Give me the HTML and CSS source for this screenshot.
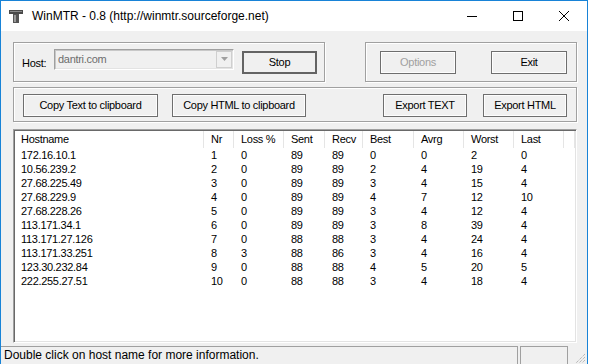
FILE: index.html
```html
<!DOCTYPE html>
<html>
<head>
  <title>WinMTR - 0.8</title>
  <link rel="stylesheet" href="styles.css">
</head>
<body>
  <div class="window">
    <div class="titlebar">
      <svg class="app-icon" width="14" height="13" viewBox="0 0 14 13">
        <rect x="0" y="0" width="14" height="4" fill="#4a4a4a"/>
        <rect x="1" y="1" width="12" height="1" fill="#8a8a8a"/>
        <rect x="4" y="4" width="6" height="9" fill="#555"/>
        <rect x="5" y="5" width="2" height="7" fill="#9a9a9a"/>
      </svg>
      <span class="title">WinMTR - 0.8 (http://winmtr.sourceforge.net)</span>
      <div class="caption">
        <span class="cap">
          <svg width="10" height="10" viewBox="0 0 10 10"><line x1="0" y1="5.5" x2="10" y2="5.5" stroke="#000"/></svg>
        </span>
        <span class="cap">
          <svg width="10" height="10" viewBox="0 0 10 10"><rect x="0.5" y="0.5" width="9" height="9" fill="none" stroke="#000"/></svg>
        </span>
        <span class="cap">
          <svg width="10" height="10" viewBox="0 0 10 10"><path d="M0 0 L10 10 M10 0 L0 10" stroke="#000" stroke-width="1"/></svg>
        </span>
      </div>
    </div>

    <div class="client">
      <div class="top-row">
        <div class="group host-group">
          <label class="host-label">Host:</label>
          <div class="combo">
            <span class="combo-text">dantri.com</span>
            <span class="combo-arrow">
              <svg width="7" height="4" viewBox="0 0 7 4"><path d="M0 0 H7 L3.5 4 Z" fill="#a0a0a0"/></svg>
            </span>
          </div>
          <button class="btn btn-default stop">Stop</button>
        </div>
        <div class="group opt-group">
          <button class="btn small" disabled>Options</button>
          <button class="btn small exit">Exit</button>
        </div>
      </div>

      <div class="group export-group">
        <button class="btn copy-text">Copy Text to clipboard</button>
        <button class="btn copy-html">Copy HTML to clipboard</button>
        <button class="btn export export-text">Export TEXT</button>
        <button class="btn export export-html">Export HTML</button>
      </div>

      <div class="list">
        <div class="row head">
          <span class="host">Hostname</span><span>Nr</span><span>Loss %</span><span>Sent</span><span>Recv</span><span>Best</span><span>Avrg</span><span>Worst</span><span>Last</span><span></span>
        </div>
        <div class="row"><span class="host">172.16.10.1</span><span>1</span><span>0</span><span>89</span><span>89</span><span>0</span><span>0</span><span>2</span><span>0</span></div>
        <div class="row"><span class="host">10.56.239.2</span><span>2</span><span>0</span><span>89</span><span>89</span><span>2</span><span>4</span><span>19</span><span>4</span></div>
        <div class="row"><span class="host">27.68.225.49</span><span>3</span><span>0</span><span>89</span><span>89</span><span>3</span><span>4</span><span>15</span><span>4</span></div>
        <div class="row"><span class="host">27.68.229.9</span><span>4</span><span>0</span><span>89</span><span>89</span><span>4</span><span>7</span><span>12</span><span>10</span></div>
        <div class="row"><span class="host">27.68.228.26</span><span>5</span><span>0</span><span>89</span><span>89</span><span>3</span><span>4</span><span>12</span><span>4</span></div>
        <div class="row"><span class="host">113.171.34.1</span><span>6</span><span>0</span><span>89</span><span>89</span><span>3</span><span>8</span><span>39</span><span>4</span></div>
        <div class="row"><span class="host">113.171.27.126</span><span>7</span><span>0</span><span>88</span><span>88</span><span>3</span><span>4</span><span>24</span><span>4</span></div>
        <div class="row"><span class="host">113.171.33.251</span><span>8</span><span>3</span><span>88</span><span>86</span><span>3</span><span>4</span><span>16</span><span>4</span></div>
        <div class="row"><span class="host">123.30.232.84</span><span>9</span><span>0</span><span>88</span><span>88</span><span>4</span><span>5</span><span>20</span><span>5</span></div>
        <div class="row"><span class="host">222.255.27.51</span><span>10</span><span>0</span><span>88</span><span>88</span><span>3</span><span>4</span><span>18</span><span>4</span></div>
      </div>
    </div>

    <div class="statusbar">
      <div class="panel main-panel">Double click on host name for more information.</div>
      <div class="panel side-panel"></div>
      <svg class="grip" width="12" height="12" viewBox="0 0 12 12">
        <path d="M11 2 L2 11 M11 5 L5 11 M11 8 L8 11" stroke="#a0a0a0" stroke-width="1" stroke-dasharray="1 1"/>
      </svg>
    </div>
  </div>
</body>
</html>
```

FILE: styles.css
```css
body {
  margin: 0;
  background: #fff;
  font-family: "Liberation Sans", Arial, sans-serif;
  font-size: 11px;
  letter-spacing: -0.3px;
  color: #000;
}
.window {
  width: 588px;
  height: 364px;
  box-sizing: border-box;
  border: 1px solid #1883d7;
  border-bottom: none;
  background: #f0f0f0;
  display: flex;
  flex-direction: column;
  overflow: hidden;
}
.titlebar {
  height: 30px;
  flex-shrink: 0;
  background: #fff;
  display: flex;
  align-items: center;
}
.app-icon {
  margin-left: 8px;
}
.title {
  margin-left: 9px;
  font-size: 12px;
  letter-spacing: 0;
}
.caption {
  margin-left: auto;
  display: flex;
}
.cap {
  width: 46px;
  height: 30px;
  display: flex;
  align-items: center;
  justify-content: center;
}
.client {
  padding: 11px 10px 0 12px;
  display: flex;
  flex-direction: column;
}
.top-row {
  display: flex;
  justify-content: space-between;
}
.group {
  box-sizing: border-box;
  border: 1px solid #a0a0a0;
  box-shadow: inset 1px 1px #fff, 1px 1px #fff;
  display: flex;
  align-items: center;
}
.host-group {
  width: 312px;
  height: 40px;
  padding-left: 8px;
}
.host-label {
  width: 32px;
  padding-top: 1px;
}
.combo {
  width: 180px;
  height: 21px;
  margin-bottom: 6px;
  box-sizing: border-box;
  border: 1px solid;
  border-color: #a0a0a0 #fff #fff #a0a0a0;
  box-shadow: inset 1px 1px #c8c8c8, inset -1px -1px #e3e3e3;
  display: flex;
  align-items: center;
  padding: 0 1px 0 3px;
}
.combo-text {
  flex: 1;
  color: #6d6d6d;
}
.combo-arrow {
  width: 16px;
  height: 17px;
  box-sizing: border-box;
  border: 1px solid #cfcfcf;
  display: flex;
  align-items: center;
  justify-content: center;
}
.btn {
  height: 23px;
  box-sizing: border-box;
  padding: 0;
  background: #f0f0f0;
  border: 1px solid #6e6e6e;
  box-shadow: inset 0 0 0 1px #fdfdfd;
  font-family: inherit;
  font-size: 11px;
  letter-spacing: -0.3px;
  color: #000;
}
.btn:disabled {
  color: #a0a0a0;
}
.btn-default {
  border: 2px solid #646464;
  box-shadow: none;
}
.stop {
  width: 75px;
  height: 23px;
  margin-left: 8px;
}
.opt-group {
  width: 212px;
  height: 40px;
  padding-left: 14px;
}
.small {
  width: 76px;
}
.exit {
  margin-left: 35px;
}
.export-group {
  margin-top: 5px;
  height: 35px;
  padding: 1px 9px 0 9px;
}
.copy-text {
  width: 135px;
}
.copy-html {
  width: 134px;
  margin-left: 14px;
}
.export {
  width: 84px;
}
.export-text {
  margin-left: auto;
}
.export-html {
  margin-left: 16px;
}
.list {
  margin-top: 7px;
  height: 214px;
  box-sizing: border-box;
  background: #fff;
  border: 1px solid;
  border-color: #a0a0a0 #fff #fff #a0a0a0;
  box-shadow: inset 1px 1px #696969, inset -1px -1px #e3e3e3;
  padding: 1px;
}
.row {
  display: grid;
  grid-template-columns: 189px 30px 50px 41px 38px 51px 50px 50px 50px 1fr;
  height: 14px;
  line-height: 14px;
}
.row span {
  padding-left: 7px;
  white-space: nowrap;
}
.row .host {
  padding-left: 6px;
}
.row.head {
  height: 17px;
  line-height: 17px;
}
.row.head span {
  border-right: 1px solid #e5e5e5;
}
.statusbar {
  margin-top: auto;
  height: 18px;
  flex-shrink: 0;
  display: flex;
  font-size: 12px;
  letter-spacing: 0;
}
.panel {
  box-sizing: border-box;
  border-top: 1px solid #a0a0a0;
}
.main-panel {
  width: 517px;
  border-right: 1px solid #a0a0a0;
  padding-left: 3px;
  line-height: 17px;
}
.side-panel {
  width: 48px;
  margin-left: 2px;
  border-left: 1px solid #a0a0a0;
  border-right: 1px solid #a0a0a0;
}
.grip {
  margin-left: auto;
  align-self: flex-end;
  margin-right: 1px;
}
```
